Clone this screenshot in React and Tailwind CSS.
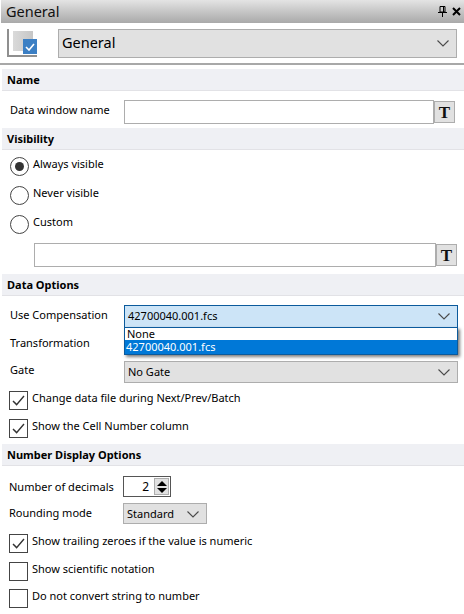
function Chevron() {
  return (
    <svg width="12" height="7" viewBox="0 0 12 7">
      <path d="M0.5 0.5 L6 6 L11.5 0.5" fill="none" stroke="#4a4a4a" strokeWidth="1.1" />
    </svg>
  );
}

function Section({ children }) {
  return (
    <div className="h-[22px] ml-[2px] bg-[#eff0f4] border-b border-[#e2e2e6] pl-[5px] pt-[1px] flex items-center text-[11px] font-bold text-black">
      {children}
    </div>
  );
}

function TButton() {
  return (
    <div className="w-[21px] h-[22px] mt-[1px] border border-[#adadad] bg-[#e1e1e1] flex items-center justify-center shrink-0">
      <span className="font-['Liberation_Serif',serif] font-bold text-[17px] leading-none text-[#111]">T</span>
    </div>
  );
}

function Select({ value, className = '' }) {
  return (
    <div className={`flex items-center justify-between border border-[#adadad] bg-[#e1e1e1] pl-[3px] pr-[7px] text-[11px] text-black ${className}`}>
      <span>{value}</span>
      <Chevron />
    </div>
  );
}

function Radio({ label, checked }) {
  return (
    <div className="h-[29px] flex items-start pl-[10px]">
      <div className="w-[19px] h-[19px] rounded-full border border-[#444] bg-white flex items-center justify-center">
        {checked && <div className="w-[9px] h-[9px] rounded-full bg-[#333]" />}
      </div>
      <span className="ml-[4px] -mt-[1px] text-[11px] leading-[16px] text-black">{label}</span>
    </div>
  );
}

function Check({ label, checked, className = '' }) {
  return (
    <div className={`flex items-start pl-[9px] ${className}`}>
      <div className="w-[19px] h-[19px] border border-[#444] bg-white flex items-center justify-center shrink-0">
        {checked && (
          <svg width="13" height="11" viewBox="0 0 13 11">
            <path d="M1 6 L4.6 9.6 L12 1" fill="none" stroke="#333" strokeWidth="1.4" />
          </svg>
        )}
      </div>
      <span className="ml-[4px] -mt-[1px] text-[11px] leading-[16px] text-black whitespace-nowrap">{label}</span>
    </div>
  );
}

export default function App() {
  return (
    <div className="relative w-[464px] h-[614px] overflow-hidden bg-white font-['Noto_Sans','Open_Sans',sans-serif] text-[11px]">
      {/* Title bar */}
      <div className="h-[23px] ml-[1px] bg-gradient-to-b from-[#e4e4e4] to-[#a9a9a9] flex items-center justify-between pl-[5px] pr-[3px]">
        <span className="text-[14.5px] leading-[23px] text-[#111]">General</span>
        <div className="flex items-center gap-[5px]">
          <svg width="9" height="11" viewBox="0 0 9 11">
            <path d="M2 0.5 H7 V6 H2 Z M5.5 0.5 V6" fill="none" stroke="#000" strokeWidth="1" />
            <path d="M0 6.5 H9 M4.5 7 V11" fill="none" stroke="#000" strokeWidth="1" />
          </svg>
          <svg width="9" height="9" viewBox="0 0 9 9">
            <path d="M1 1 L8 8 M8 1 L1 8" fill="none" stroke="#000" strokeWidth="2" />
          </svg>
        </div>
      </div>

      {/* Page picker */}
      <div className="h-[40px] flex items-center border-b-2 border-[#a8a8a8] box-content">
        <div className="relative w-[30px] h-[28px] ml-[7px] border-l-2 border-b-2 border-[#8f8f8f] shrink-0">
          <div className="absolute left-[4px] top-[2px] w-[20px] h-[20px] bg-gradient-to-r from-[#dadada] to-[#c6c6c6]" />
          <div className="absolute right-0 bottom-[1px] w-[14px] h-[15px] bg-[#3b7fc4] flex items-center justify-center">
            <svg width="10" height="8" viewBox="0 0 10 8">
              <path d="M1 4 L4 7 L9 1" fill="none" stroke="white" strokeWidth="1.6" />
            </svg>
          </div>
        </div>
        <Select value="General" className="ml-[21px] w-[399px] h-[29px] !text-[14.5px]" />
      </div>

      <div className="h-[4px]" />
      <Section>Name</Section>

      <div className="h-[37px] flex items-start pt-[9px] pl-[10px]">
        <span className="w-[114px] shrink-0 mt-[2px]">Data window name</span>
        <div className="w-[310px] h-[24px] border border-[#adadad] bg-white" />
        <TButton />
      </div>

      <Section>Visibility</Section>
      <div className="h-[93px] pt-[7px]">
        <Radio label="Always visible" checked />
        <Radio label="Never visible" />
        <Radio label="Custom" />
      </div>
      <div className="h-[24px] flex items-start pl-[34px]">
        <div className="w-[402px] h-[24px] border border-[#adadad] bg-white" />
        <TButton />
      </div>

      <div className="h-[7px]" />
      <Section>Data Options</Section>

      <div className="relative h-[94px] pt-[9px]">
        <div className="h-[23px] flex items-center pl-[10px]">
          <span className="w-[114px] shrink-0 -mt-[2px]">Use Compensation</span>
          <Select value="42700040.001.fcs" className="w-[334px] h-[23px] !border-[#0b5a9c] !bg-[#cce4f7]" />
        </div>
        <div className="h-[33px] flex items-center pl-[10px]">
          <span className="-mt-[3px]">Transformation</span>
        </div>
        <div className="h-[22px] flex items-center pl-[10px]">
          <span className="w-[114px] shrink-0 -mt-[4px]">Gate</span>
          <Select value="No Gate" className="w-[334px] h-[22px]" />
        </div>

        {/* Open dropdown */}
        <div className="absolute left-[124px] top-[31px] w-[334px] h-[28px] bg-white border border-[#0b5a9c] shadow-[2px_2px_3px_rgba(0,0,0,0.5)]">
          <div className="h-[12px] leading-[12px] pl-[2px] text-black">None</div>
          <div className="h-[14px] leading-[14px] pl-[1px] bg-[#0078d7] text-white">42700040.001.fcs</div>
        </div>
      </div>

      <Check label="Change data file during Next/Prev/Batch" checked className="h-[28px] mt-[1px]" />
      <Check label="Show the Cell Number column" checked className="h-[25px]" />

      <Section>Number Display Options</Section>

      <div className="h-[27px] mt-[10px] flex items-start pl-[9px]">
        <span className="w-[114px] shrink-0 mt-[3px] whitespace-nowrap">Number of decimals</span>
        <div className="w-[48px] h-[21px] border border-[#555] bg-white flex items-center justify-end pr-[1px]">
          <span className="mr-[5px] text-[12px]">2</span>
          <div className="w-[15px] h-[17px] bg-[#e1e1e1] border border-[#adadad] flex flex-col items-center justify-center gap-[2px]">
            <div className="w-0 h-0 border-x-[5px] border-x-transparent border-b-[5px] border-b-black" />
            <div className="w-0 h-0 border-x-[5px] border-x-transparent border-t-[5px] border-t-black" />
          </div>
        </div>
      </div>
      <div className="h-[31px] flex items-start pl-[9px]">
        <span className="w-[114px] shrink-0 mt-[2px]">Rounding mode</span>
        <Select value="Standard" className="w-[84px] h-[21px] pt-[1px]" />
      </div>

      <Check label="Show trailing zeroes if the value is numeric" checked className="h-[28px]" />
      <Check label="Show scientific notation" className="h-[27px]" />
      <Check label="Do not convert string to number" className="h-[25px]" />
    </div>
  );
}
